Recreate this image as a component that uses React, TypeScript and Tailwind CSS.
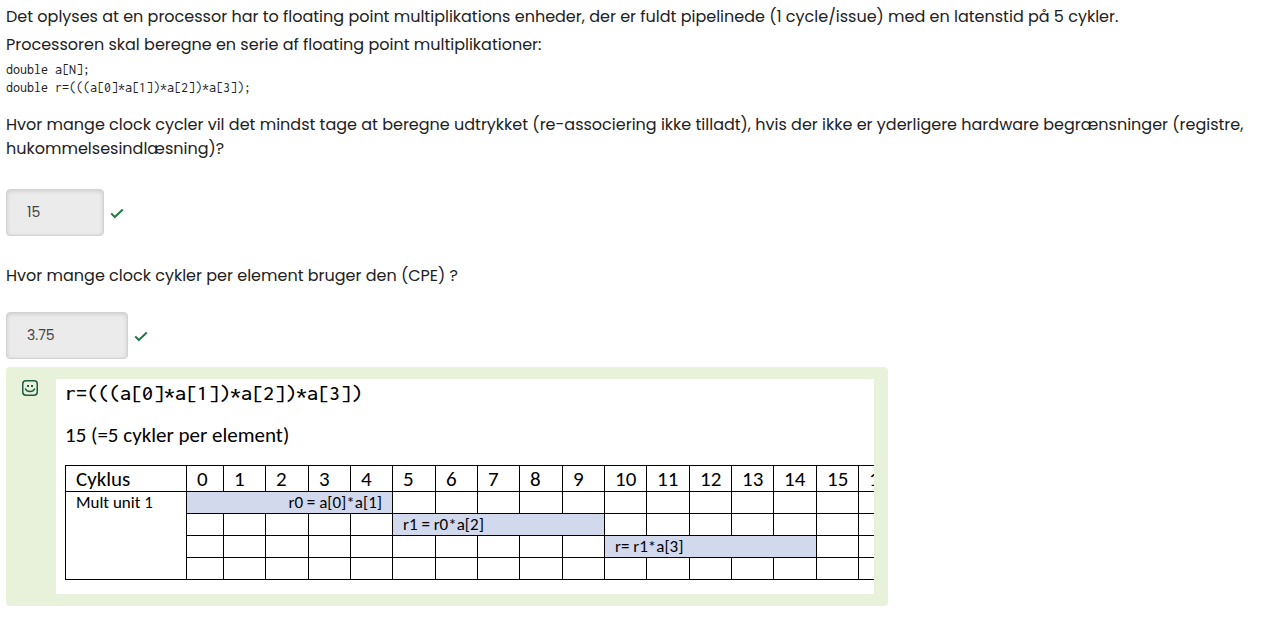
import type { ReactNode } from "react";

const CYCLE_WIDTHS = [
  "w-[37px]", "w-[42px]", "w-[43px]", "w-[42px]", "w-[42px]", "w-[43px]",
  "w-[42px]", "w-[42px]", "w-[43px]", "w-[42px]", "w-[42px]", "w-[43px]",
  "w-[42px]", "w-[42px]", "w-[43px]", "w-[42px]", "w-[43px]",
];

type Operation = { start: number; label: string; align: string };

const ROWS: (Operation | null)[] = [
  { start: 0, label: "r0 = a[0]*a[1]", align: "text-right" },
  { start: 5, label: "r1 = r0*a[2]", align: "text-left" },
  { start: 10, label: "r= r1*a[3]", align: "text-left" },
  null,
];

const LATENCY = 5;

function CheckMark() {
  return (
    <svg viewBox="0 0 14 12" className="h-3 w-3.5" fill="none" role="img" aria-label="Korrekt">
      <path d="M1.2 6.4 4.8 10 12.8 2.4" stroke="#237a45" strokeWidth="2" />
    </svg>
  );
}

function Smiley() {
  return (
    <svg viewBox="0 0 16 16" className="mt-px h-4 w-4 shrink-0" fill="none" aria-hidden="true">
      <rect x="0.75" y="0.75" width="14.5" height="14.5" rx="3.2" stroke="#1f5c43" strokeWidth="1.5" />
      <rect x="5" y="5" width="2" height="2" fill="#1f5c43" />
      <rect x="9" y="5" width="2" height="2" fill="#1f5c43" />
      <path d="M3.2 8.5c.9 2.1 2.7 3.1 4.8 3.1s3.9-1 4.8-3.1" stroke="#1f5c43" strokeWidth="1.5" />
    </svg>
  );
}

function Answer({ id, value, width }: { id: string; value: string; width: string }) {
  return (
    <div className="flex items-center gap-1.5">
      <input
        id={id}
        readOnly
        defaultValue={value}
        className={`${width} h-[47px] rounded border border-[#d2d2d2] bg-[#ebebeb] px-5 text-sm text-[#444] shadow-[inset_0_1px_4px_rgba(0,0,0,0.14)] outline-none`}
      />
      <CheckMark />
    </div>
  );
}

function OperationCells({ operation }: { operation: Operation | null }) {
  const cells: ReactNode[] = [];
  for (let cycle = 0; cycle < CYCLE_WIDTHS.length; cycle++) {
    if (operation && cycle === operation.start) {
      cells.push(
        <td key={cycle} colSpan={LATENCY} className={`${operation.align} border border-black bg-[#d2d9ec] px-2.5`}>
          {operation.label}
        </td>,
      );
      cycle += LATENCY - 1;
    } else {
      cells.push(<td key={cycle} className="border border-black" />);
    }
  }
  return <>{cells}</>;
}

function Schedule() {
  return (
    <table className="w-[837px] table-fixed border-collapse text-[17px] leading-5 text-black">
      <colgroup>
        <col className="w-[121px]" />
        {CYCLE_WIDTHS.map((width, cycle) => (
          <col key={cycle} className={width} />
        ))}
      </colgroup>
      <thead>
        <tr className="h-[26px] text-[21px] leading-6">
          <th scope="col" className="border border-black px-2.5 py-0 text-left font-normal">Cyklus</th>
          {CYCLE_WIDTHS.map((_, cycle) => (
            <th key={cycle} scope="col" className="border border-black py-0 pl-2.5 text-left font-normal">
              {cycle}
            </th>
          ))}
        </tr>
      </thead>
      <tbody>
        {ROWS.map((operation, row) => (
          <tr key={row} className="h-[22px]">
            {row === 0 && (
              <th scope="rowgroup" rowSpan={ROWS.length} className="border border-black px-2.5 pt-px text-left align-top font-normal">
                Mult unit 1
              </th>
            )}
            <OperationCells operation={operation} />
          </tr>
        ))}
      </tbody>
    </table>
  );
}

export default function App() {
  return (
    <main className="bg-white px-1.5 pt-[5px] pb-5 font-[Poppins,Inter,sans-serif] text-base leading-6 text-[#212121]">
      <p>
        Det oplyses at en processor har to floating point multiplikations enheder, der er fuldt pipelinede (1
        cycle/issue) med en latenstid på 5 cykler.
      </p>
      <p className="mt-1">Processoren skal beregne en serie af floating point multiplikationer:</p>
      <pre className="mt-1 font-[Inconsolata,'DejaVu_Sans_Mono',monospace] text-sm leading-[18px]">
        {"double a[N];\ndouble r=(((a[0]*a[1])*a[2])*a[3]);"}
      </pre>
      <label htmlFor="cycles" className="mt-4 block">
        Hvor mange clock cycler vil det mindst tage at beregne udtrykket (re-associering ikke tilladt), hvis der ikke
        er yderligere hardware begrænsninger (registre, hukommelsesindlæsning)?
      </label>
      <div className="mt-7">
        <Answer id="cycles" value="15" width="w-[98px]" />
      </div>
      <label htmlFor="cpe" className="mt-7 block">
        Hvor mange clock cykler per element bruger den (CPE) ?
      </label>
      <div className="mt-6">
        <Answer id="cpe" value="3.75" width="w-[122px]" />
      </div>
      <section className="mt-2 flex max-w-[882px] gap-[18px] rounded bg-[#e8f2da] py-3 pr-3.5 pl-4">
        <Smiley />
        <div className="min-w-0 flex-1 overflow-hidden bg-white px-[9px] pb-3.5 font-[Carlito,Lato,sans-serif] text-black">
          <p className="pt-0.5 font-[Inconsolata,'DejaVu_Sans_Mono',monospace] text-[22px] leading-6 font-medium">
            r=(((a[0]*a[1])*a[2])*a[3])
          </p>
          <p className="my-[18px] text-[21px] leading-6">15 (=5 cykler per element)</p>
          <Schedule />
        </div>
      </section>
    </main>
  );
}
